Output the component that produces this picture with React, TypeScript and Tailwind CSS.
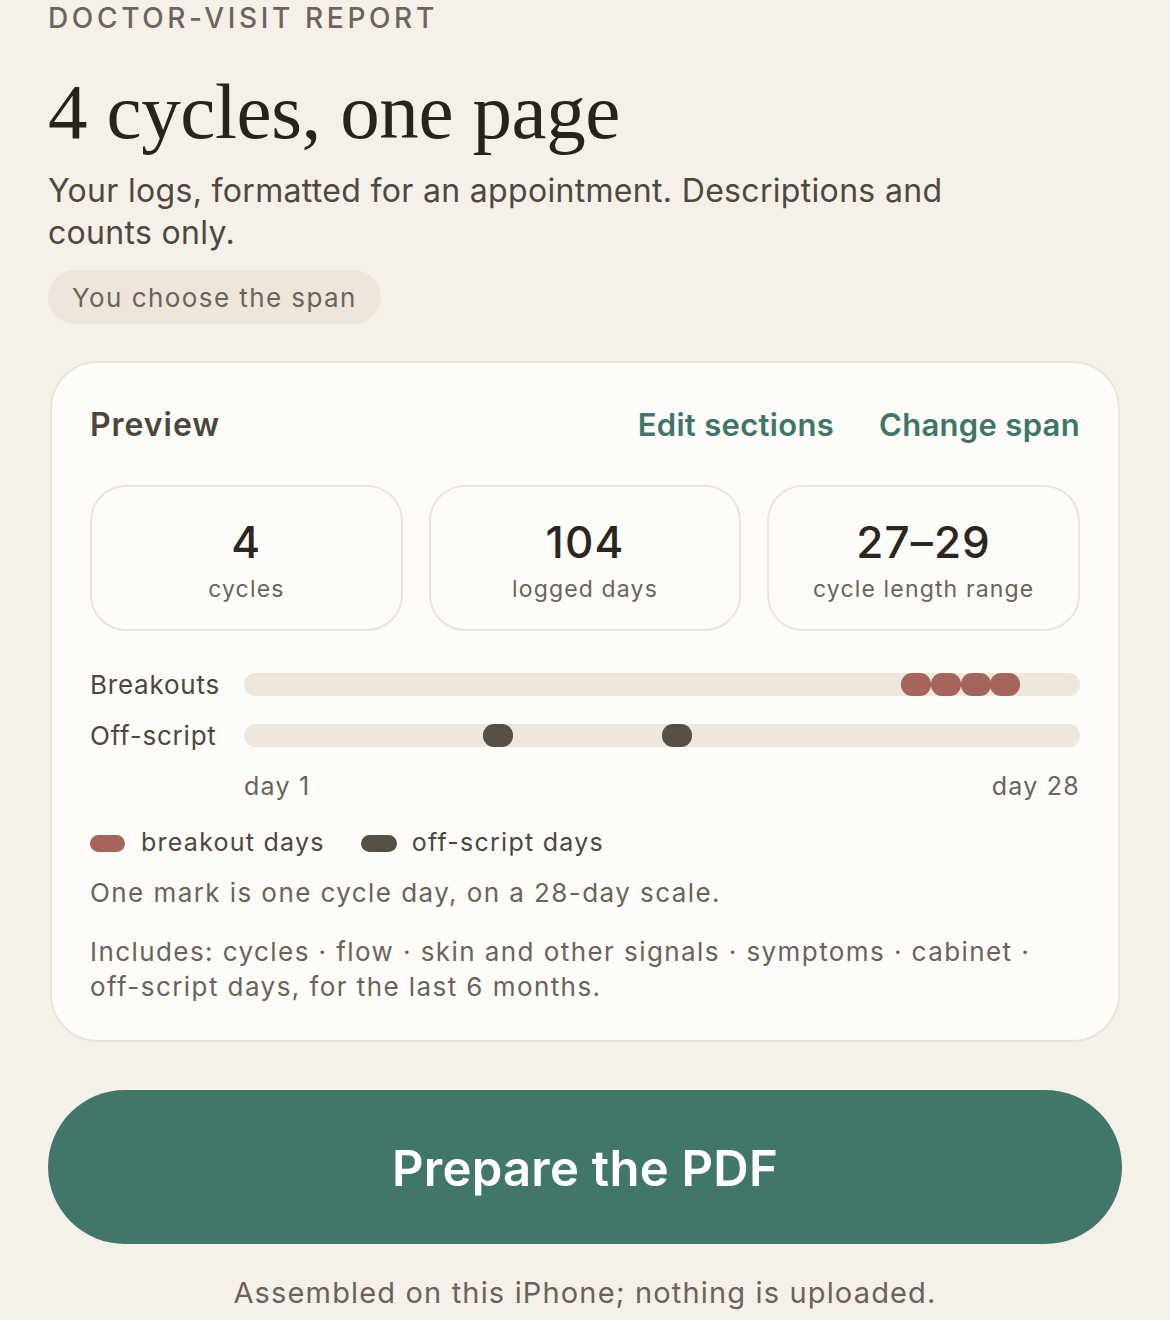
import React from 'react';

const sans = { fontFamily: 'Inter, "Noto Sans", sans-serif' };

const DAY = 100 / 28;

function Track({ days, color }: { days: number[]; color: string }) {
    return (
        <div className="relative h-[23px] flex-1 rounded-full bg-[#efe7dd]">
            {days.map((d) => (
                <span
                    key={d}
                    className={`absolute top-0 h-[23px] w-[30px] rounded-[11px] ${color}`}
                    style={{ left: `${(d - 1) * DAY}%` }}
                />
            ))}
        </div>
    );
}

function Stat({ value, label }: { value: string; label: string }) {
    return (
        <div className="flex h-[146px] flex-col items-center justify-center rounded-[36px] border-2 border-[#ece6da] bg-[#fdfcf9] pt-[4px]">
            <div className="text-[44px] font-medium leading-none tracking-wide text-[#2b2621]">{value}</div>
            <div className="mt-[14px] text-[23px] leading-none tracking-[0.05em] text-[#6b6359]">{label}</div>
        </div>
    );
}

export default function App() {
    return (
        <div className="min-h-[1320px] w-[1170px] overflow-hidden bg-[#f6f1e8] px-[48px]" style={sans}>
            <div className="pt-[4px] text-[28px] font-medium uppercase leading-[28px] tracking-[0.13em] text-[#6d655b]">
                Doctor-visit report
            </div>

            <h1
                className="mt-[40px] text-[79px] leading-[80px] tracking-[-0.005em] text-[#27231e]"
                style={{ fontFamily: '"Liberation Serif", "DejaVu Serif", serif' }}
            >
                4 cycles, one page
            </h1>

            <p className="mt-[18px] w-[1000px] text-[32px] leading-[42px] tracking-[0.01em] text-[#4f483f]">
                Your logs, formatted for an appointment. Descriptions and counts only.
            </p>

            <div className="mt-[16px] inline-flex h-[54px] items-center rounded-full bg-[#eee6dc] px-[24px] text-[26px] tracking-[0.055em] text-[#6b6359]">
                You choose the span
            </div>

            {/* Preview card */}
            <div className="mt-[37px] ml-[2px] w-[1070px] rounded-[48px] border-2 border-[#ebe4d8] bg-[#fdfcf8] px-[38px] pb-[36px] pt-[38px]">
                <div className="flex items-center justify-between">
                    <h2 className="text-[32px] font-semibold tracking-[0.03em] text-[#4d463d]">Preview</h2>
                    <div className="flex gap-[45px] text-[31px] font-semibold tracking-[0.01em] text-[#3f7667]">
                        <button>Edit sections</button>
                        <button>Change span</button>
                    </div>
                </div>

                <div className="mt-[36px] grid grid-cols-3 gap-[26px]">
                    <Stat value="4" label="cycles" />
                    <Stat value="104" label="logged days" />
                    <Stat value="27–29" label="cycle length range" />
                </div>

                <div className="mt-[42px] flex flex-col gap-[28px]">
                    <div className="flex items-center">
                        <span className="w-[154px] text-[26px] leading-[23px] tracking-[0.03em] text-[#4d463d]">Breakouts</span>
                        <Track days={[23, 24, 25, 26]} color="bg-[#a5655a]" />
                    </div>
                    <div className="flex items-center">
                        <span className="w-[154px] text-[26px] leading-[23px] tracking-[0.03em] text-[#4d463d]">Off-script</span>
                        <Track days={[9, 15]} color="bg-[#575045]" />
                    </div>
                </div>

                <div className="ml-[154px] mt-[24px] flex justify-between text-[25px] leading-[30px] tracking-[0.05em] text-[#6b6359]">
                    <span>day 1</span>
                    <span>day 28</span>
                </div>

                <div className="mt-[27px] flex h-[30px] items-center text-[25px] tracking-[0.05em] text-[#4d463d]">
                    <span className="h-[17px] w-[35px] rounded-full bg-[#a5655a]" />
                    <span className="ml-[16px]">breakout days</span>
                    <span className="ml-[36px] h-[17px] w-[36px] rounded-full bg-[#575045]" />
                    <span className="ml-[15px]">off-script days</span>
                </div>

                <p className="mt-[17px] text-[26px] leading-[35px] tracking-[0.055em] text-[#6b6359]">
                    One mark is one cycle day, on a 28-day scale.
                </p>

                <p className="mt-[24px] text-[26px] leading-[35px] tracking-[0.055em] text-[#6b6359]">
                    Includes: cycles · flow · skin and other signals · symptoms · cabinet ·{' '}
                    <span className="whitespace-nowrap">off-script</span> days, for the last 6 months.
                </p>
            </div>

            <button className="mt-[48px] flex h-[154px] w-[1074px] items-center justify-center rounded-full bg-[#41766a] pt-[4px] text-[49px] font-semibold tracking-[0.005em] text-white">
                Prepare the PDF
            </button>

            <p className="mt-[29px] text-center text-[29px] leading-[40px] tracking-[0.04em] text-[#6b6359]">
                Assembled on this iPhone; nothing is uploaded.
            </p>
        </div>
    );
}
